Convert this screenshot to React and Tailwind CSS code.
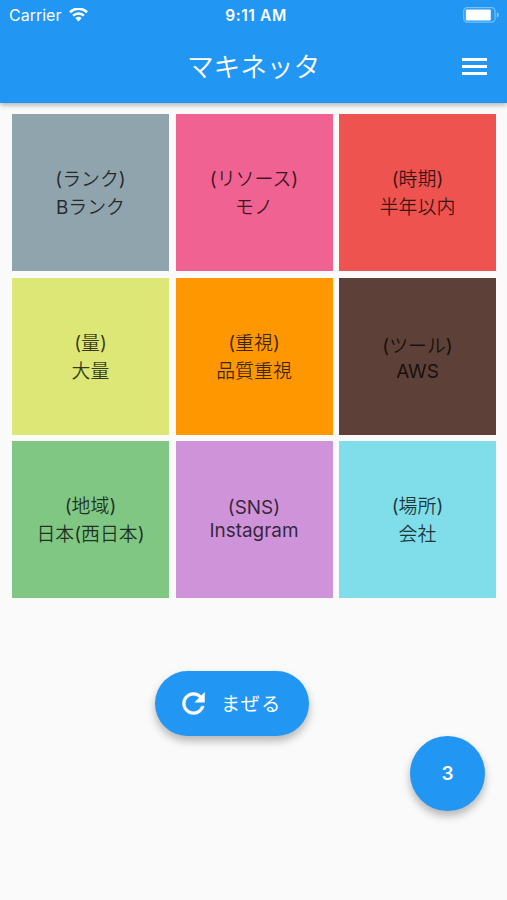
import React from 'react';

const tiles = [
  { label: '(ランク)', value: 'Bランク', color: 'bg-[#90a4ae]', text: 'leading-[28px] pt-[2px]' },
  { label: '(リソース)', value: 'モノ', color: 'bg-[#f06292]', text: 'leading-[28px] pt-[2px]' },
  { label: '(時期)', value: '半年以内', color: 'bg-[#ef5350]', text: 'leading-[28px] pt-[2px]' },
  { label: '(量)', value: '大量', color: 'bg-[#dce775]', text: 'leading-[28px] pt-[3px]' },
  { label: '(重視)', value: '品質重視', color: 'bg-[#ff9800]', text: 'leading-[28px] pt-[3px]' },
  { label: '(ツール)', value: 'AWS', color: 'bg-[#5d4037]', text: 'leading-[25px] pt-[5px]' },
  { label: '(地域)', value: '日本(西日本)', color: 'bg-[#81c784]', text: 'leading-[28px] pt-[2px]' },
  { label: '(SNS)', value: 'Instagram', color: 'bg-[#ce93d8]', text: 'leading-[23px] pb-[2px]' },
  { label: '(場所)', value: '会社', color: 'bg-[#80deea]', text: 'leading-[28px] pt-[2px]' },
];

function WifiIcon() {
  return (
    <svg className="h-[15px] w-[19px]" viewBox="0 0 19 15" fill="none" stroke="white" strokeWidth="2.6">
      <path d="M1 4.2A12.2 12.2 0 0 1 18 4.2" />
      <path d="M4.1 7.6A7.8 7.8 0 0 1 14.9 7.6" />
      <path d="M9.5 13.4L6.4 10.2A4.6 4.6 0 0 1 12.6 10.2Z" fill="white" stroke="none" />
    </svg>
  );
}

function BatteryIcon() {
  return (
    <svg className="h-[16px] w-[37px]" viewBox="0 0 37 16">
      <rect x="0.7" y="0.7" width="31.4" height="14.4" rx="3.6" fill="none" stroke="white" strokeOpacity="0.4" strokeWidth="1.2" />
      <rect x="2.8" y="2.4" width="25" height="11" rx="1.2" fill="white" />
      <path d="M33.8 5.3c1.6.7 2 1.5 2 2.6s-.4 1.9-2 2.6z" fill="white" fillOpacity="0.45" />
    </svg>
  );
}

export default function App() {
  return (
    <div className="flex h-[900px] w-[507px] flex-col overflow-hidden bg-[#fafafa] font-['Inter','Noto_Sans_CJK_JP_DemiLight','Noto_Sans_CJK_JP',sans-serif]">
      <header className="h-[103px] shrink-0 bg-[#2196f3] text-white shadow-[0_2px_5px_rgba(0,0,0,0.3)]">
        <div className="grid h-[30px] grid-cols-3 items-center pl-[9px] pr-[7px]">
          <div className="flex items-center gap-[8px] text-[16px]">
            <span>Carrier</span>
            <WifiIcon />
          </div>
          <span className="pl-[3px] pt-px text-center text-[15.5px] font-semibold tracking-[0.6px]">9:11 AM</span>
          <div className="flex justify-end">
            <BatteryIcon />
          </div>
        </div>
        <div className="grid h-[73px] grid-cols-[1fr_auto_1fr] items-center pr-[20px]">
          <h1 className="col-start-2 pl-[20px] pt-px text-[26.8px] font-normal leading-none tracking-[-0.2px]">マキネッタ</h1>
          <button className="flex h-[17px] w-[25px] flex-col justify-between justify-self-end" aria-label="menu">
            <span className="h-[3px] w-full bg-white" />
            <span className="h-[3px] w-full bg-white" />
            <span className="h-[3px] w-full bg-white" />
          </button>
        </div>
      </header>

      <main className="flex flex-1 flex-col">
        <div className="ml-[12px] mt-[11px] grid w-[484px] grid-cols-[157px_157px_157px] justify-between gap-y-[6.5px]">
          {tiles.map((t) => (
            <div
              key={t.label}
              className={`flex h-[157px] flex-col items-center justify-center whitespace-nowrap text-[18.9px] text-black/75 ${t.color} ${t.text}`}
            >
              <span>{t.label}</span>
              <span>{t.value}</span>
            </div>
          ))}
        </div>

        <button className="ml-[155px] mt-[73px] flex h-[65px] w-[154px] items-center rounded-full bg-[#2196f3] pl-[22px] text-white shadow-[0_5px_8px_rgba(0,0,0,0.28)]">
          <svg className="h-[33px] w-[33px]" viewBox="0 0 24 24" fill="white" stroke="white" strokeWidth="0.4">
            <path d="M17.65 6.35C16.2 4.9 14.21 4 12 4c-4.42 0-7.99 3.58-7.99 8s3.57 8 7.99 8c3.73 0 6.84-2.55 7.73-6h-2.080c-.82 2.33-3.04 4-5.65 4-3.31 0-6-2.69-6-6s2.69-6 6-6c1.66 0 3.14.69 4.22 1.78L13 11h7V4l-2.35 2.35z" />
          </svg>
          <span className="ml-[11px] font-['Noto_Sans_CJK_JP',sans-serif] text-[19px] font-normal tracking-[1.4px]">まぜる</span>
        </button>

        <button className="ml-[410px] flex h-[75px] w-[75px] items-center justify-center rounded-full bg-[#2196f3] pt-[2px] text-[19px] font-semibold text-white shadow-[0_5px_8px_rgba(0,0,0,0.28)]">
          3
        </button>
      </main>
    </div>
  );
}
